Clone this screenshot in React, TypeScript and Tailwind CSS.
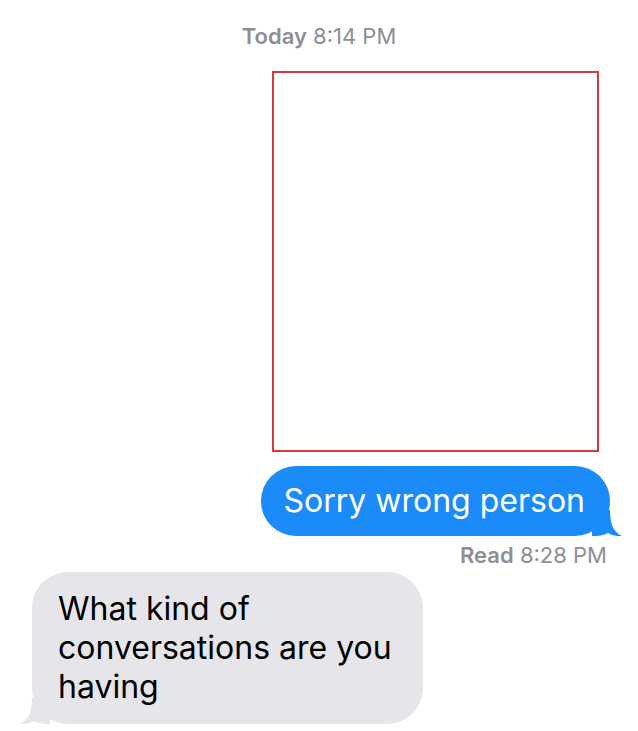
export default function App() {
  return (
    <div className="flex min-h-[731px] w-[638px] flex-col bg-white font-['Inter',sans-serif] antialiased">
      <div className="mt-[24px] text-center text-[22px] leading-[24px] text-[#8e8e93]">
        <span className="font-semibold">Today</span> 8:14 PM
      </div>

      <div className="mt-[23px] mr-[39px] h-[381px] w-[327px] self-end border-2 border-[#d13b3b]" />

      <div className="relative mt-[14px] mr-[28px] self-end">
        <div className="flex h-[70px] items-center rounded-[35px] bg-[#1b8bf9] pr-[25px] pl-[23px] text-[32px] leading-[36px] text-white">
          Sorry wrong person
        </div>
        <svg
          className="absolute right-[-12px] bottom-0"
          width="30"
          height="26"
          viewBox="0 0 30 26"
        >
          <path
            d="M0 0 L18 0 C18 13 21 22 30 26 C24 26.5 19 25 16 23 C12 25.5 6 26 0 26 Z"
            fill="#1b8bf9"
          />
        </svg>
      </div>

      <div className="mt-[7px] mr-[31px] self-end text-[22px] leading-[24px] text-[#8e8e93]">
        <span className="font-semibold">Read</span> 8:28 PM
      </div>

      <div className="relative mt-[5px] ml-[32px] self-start">
        <div className="w-[391px] rounded-[36px] bg-[#e5e5ea] pt-[17px] pr-[20px] pb-[18px] pl-[26px] text-[32px] leading-[39px] text-black">
          What kind of conversations are you having
        </div>
        <svg
          className="absolute bottom-0 left-[-12px]"
          width="30"
          height="26"
          viewBox="0 0 30 26"
        >
          <path
            d="M30 0 L12 0 C12 13 9 22 0 26 C6 26.5 11 25 14 23 C18 25.5 24 26 30 26 Z"
            fill="#e5e5ea"
          />
        </svg>
      </div>
    </div>
  );
}
